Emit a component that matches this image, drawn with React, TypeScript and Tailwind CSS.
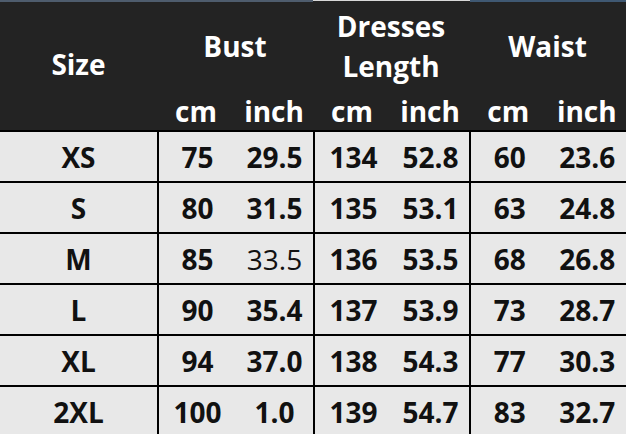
import React from "react";

const rows: { size: string; v: string[] }[] = [
  { size: "XS", v: ["75", "29.5", "134", "52.8", "60", "23.6"] },
  { size: "S", v: ["80", "31.5", "135", "53.1", "63", "24.8"] },
  { size: "M", v: ["85", "33.5", "136", "53.5", "68", "26.8"] },
  { size: "L", v: ["90", "35.4", "137", "53.9", "73", "28.7"] },
  { size: "XL", v: ["94", "37.0", "138", "54.3", "77", "30.3"] },
  { size: "2XL", v: ["100", "1.0", "139", "54.7", "83", "32.7"] },
];

function Group({ title, lines }: { title?: string; lines?: string[] }) {
  return (
    <div className="flex flex-col">
      <div className="h-[88px] flex flex-col items-center justify-center leading-[40px]">
        {lines ? lines.map((l) => <span key={l}>{l}</span>) : <span>{title}</span>}
      </div>
      <div className="h-[40px] grid grid-cols-2 items-center text-center">
        <span>cm</span>
        <span>inch</span>
      </div>
    </div>
  );
}

export default function App() {
  return (
    <div
      className="w-[626px] h-[434px] overflow-hidden bg-[#e8e8e8] text-[28px] font-bold"
      style={{ fontFamily: '"Open Sans", "Noto Sans", sans-serif' }}
    >
      <div className="h-[2px] flex bg-[#232323]">
        <div className="w-[313px] bg-[#4e5c6d]" />
        <div className="w-[157px] h-[1px] bg-[#d8d8d8]" />
        <div className="flex-1 bg-[#3f5872]" />
      </div>
      <div className="h-[128px] bg-[#232323] text-white grid grid-cols-[157px_156px_156px_157px]">
        <div className="flex items-center justify-center pb-[4px]">Size</div>
        <Group title="Bust" />
        <Group lines={["Dresses", "Length"]} />
        <Group title="Waist" />
      </div>
      {rows.map((r) => (
        <div
          key={r.size}
          className="h-[51px] border-t-2 border-black grid grid-cols-[157px_156px_156px_157px] text-[#111]"
        >
          <div className="flex items-center justify-center">{r.size}</div>
          {[0, 1, 2].map((g) => (
            <div key={g} className="border-l-2 border-black grid grid-cols-2 items-center text-center">
              <span>{r.v[g * 2]}</span>
              <span className={r.size === "M" && g === 0 ? "font-normal" : ""}>{r.v[g * 2 + 1]}</span>
            </div>
          ))}
        </div>
      ))}
    </div>
  );
}
